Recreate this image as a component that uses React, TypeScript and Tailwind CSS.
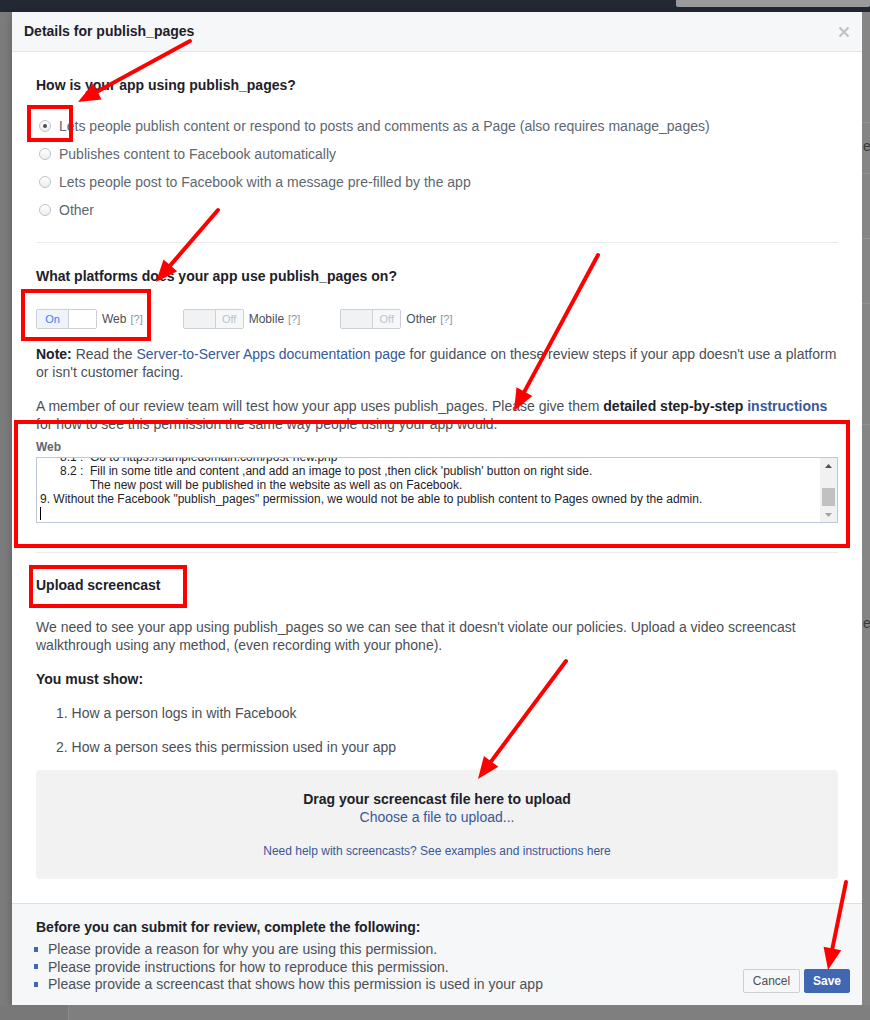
import React from "react";

const radios = [
  "Lets people publish content or respond to posts and comments as a Page (also requires manage_pages)",
  "Publishes content to Facebook automatically",
  "Lets people post to Facebook with a message pre-filled by the app",
  "Other",
];

const platforms = [
  { name: "Web", on: true },
  { name: "Mobile", on: false },
  { name: "Other", on: false },
];

const todo = [
  "Please provide a reason for why you are using this permission.",
  "Please provide instructions for how to reproduce this permission.",
  "Please provide a screencast that shows how this permission is used in your app",
];

// red annotation arrows: [startX, startY, tipX, tipY]
const arrows = [
  [190, 41, 78, 102],
  [218, 210, 156, 282],
  [598, 255, 514, 411],
  [566, 661, 478, 779],
  [846, 882, 828, 970],
];

function Arrow({ a }: { a: number[] }) {
  const [sx, sy, tx, ty] = a;
  const len = Math.hypot(tx - sx, ty - sy);
  const ux = (tx - sx) / len;
  const uy = (ty - sy) / len;
  const bx = tx - ux * 22;
  const by = ty - uy * 22;
  const nx = -uy * 9;
  const ny = ux * 9;
  return (
    <g>
      <line x1={sx} y1={sy} x2={bx} y2={by} stroke="#ff0000" strokeWidth={4} strokeLinecap="round" />
      <polygon points={`${tx},${ty} ${bx + nx},${by + ny} ${bx - nx},${by - ny}`} fill="#ff0000" />
    </g>
  );
}

function Toggle({ on }: { on: boolean }) {
  if (on) {
    return (
      <div className="flex h-[20px] w-[61px] overflow-hidden rounded-[2px] border border-[#ccd0d5]">
        <div className="flex w-[31px] items-center justify-center bg-[#eef3fc] text-[11px] text-[#4080ff]">On</div>
        <div className="flex-1 border-l border-[#ccd0d5] bg-white" />
      </div>
    );
  }
  return (
    <div className="flex h-[20px] w-[61px] overflow-hidden rounded-[2px] border border-[#ccd0d5]">
      <div className="w-[31px] bg-[#f1f2f4]" />
      <div className="flex flex-1 items-center justify-center border-l border-[#ccd0d5] bg-[#f6f7f9] text-[11px] text-[#bec2c9]">
        Off
      </div>
    </div>
  );
}

export default function App() {
  return (
    <div className="relative h-[1020px] w-[870px] overflow-hidden bg-[#7c7c7c] font-['Liberation_Sans',Arial,sans-serif]">
      {/* dimmed page behind the dialog */}
      <div className="flex h-[12px] justify-end bg-[#222933]">
        <div className="h-[7px] w-[194px] rounded-b-[2px] bg-[#9a9a9a]" />
      </div>
      <div className="absolute left-[862px] top-[12px] h-[1008px] w-[8px] bg-[#858585]">
        <div className="mt-[110px] h-px bg-[#929292]" />
        <div className="mt-[50px] h-px bg-[#929292]" />
        <div className="mt-[64px] h-px bg-[#929292]" />
        <div className="mt-[64px] h-px bg-[#929292]" />
        <div className="mt-[120px] h-px bg-[#929292]" />
      </div>
      <div className="absolute left-[863px] top-[136px] text-[14px] text-[#3a3a3a]">er</div>
      <div className="absolute left-[863px] top-[613px] text-[14px] text-[#3a3a3a]">er</div>
      <div className="absolute left-0 top-[1005px] flex h-[15px] w-[870px]">
        <div className="w-[68px] bg-[#787878]" />
        <div className="flex-1 border-l border-[#8c8c8c] bg-[#7f7f7f]" />
      </div>

      {/* dialog */}
      <div className="pl-[12px]">
        <div className="flex h-[993px] w-[850px] flex-col bg-white shadow-[0_2px_8px_rgba(0,0,0,0.25)]">
          <div className="flex h-[40px] items-center justify-between border-b border-[#e5e5e5] bg-[#f6f7f9] px-[12px]">
            <span className="text-[14px] font-bold text-[#1d2129]">Details for publish_pages</span>
            <svg width="12" height="12" viewBox="0 0 12 12">
              <path d="M1.5 1.5 L10.5 10.5 M10.5 1.5 L1.5 10.5" stroke="#bec2c9" strokeWidth="2.2" />
            </svg>
          </div>

          <div className="flex-1 px-[24px] pt-[24px] text-[14px] leading-[18px] text-[#4b4f56]">
            <h3 className="font-bold text-[#1d2129]">How is your app using publish_pages?</h3>
            <div className="mt-[18px]">
              {radios.map((r, i) => (
                <div key={i} className="flex h-[28px] items-center">
                  <div className="ml-[3px] flex h-[12px] w-[12px] items-center justify-center rounded-full border border-[#bec2c9] bg-gradient-to-b from-white to-[#eceef0]">
                    {i === 0 && <div className="h-[4px] w-[4px] rounded-full bg-[#4b4f56]" />}
                  </div>
                  <span className="ml-[8px] text-[#606770]">{r}</span>
                </div>
              ))}
            </div>
            <div className="mt-[18px] h-px bg-[#e9ebee]" />

            <h3 className="mt-[24px] font-bold text-[#1d2129]">What platforms does your app use publish_pages on?</h3>
            <div className="mt-[24px] flex items-center gap-[40px]">
              {platforms.map((p) => (
                <div key={p.name} className="flex items-center">
                  <Toggle on={p.on} />
                  <span className="ml-[5px] text-[12px] text-[#4b4f56]">{p.name}</span>
                  <span className="ml-[4px] text-[11px] text-[#90949c]">[?]</span>
                </div>
              ))}
            </div>

            <p className="mt-[16px]">
              <b className="text-[#1d2129]">Note:</b> Read the{" "}
              <span className="text-[#385898]">Server-to-Server Apps documentation page</span> for guidance on these
              review steps if your app doesn't use a platform
              <br />
              or isn't customer facing.
            </p>
            <p className="mt-[16px]">
              A member of our review team will test how your app uses publish_pages. Please give them{" "}
              <b className="text-[#1d2129]">detailed step-by-step</b>{" "}
              <b className="text-[#385898]">instructions</b>
              <br />
              for how to see this permission the same way people using your app would.
            </p>

            <div className="mt-[6px] text-[12px] font-bold leading-[16px] text-[#606770]">Web</div>
            <div className="mt-[2px] flex h-[66px] border border-[#bdc7d8]">
              <div className="flex-1 overflow-hidden pl-[3px] text-[12px] leading-[14px] text-[#1d2129]">
                <div className="-mt-[8px] whitespace-pre">
                  <div className="flex">
                    <span className="w-[50px] pl-[20px]">8.1 :</span>
                    <span>Go to https://sampledomain.com/post-new.php</span>
                  </div>
                  <div className="flex">
                    <span className="w-[50px] pl-[20px]">8.2 :</span>
                    <span>Fill in some title and content ,and add an image to post ,then click 'publish' button on right side.</span>
                  </div>
                  <div className="pl-[50px]">The new post will be published in the website as well as on Facebook.</div>
                  <div>9. Without the Facebook "publish_pages" permission, we would not be able to publish content to Pages owned by the admin.</div>
                  <div className="flex h-[14px] items-center">
                    <div className="h-[13px] w-px bg-black" />
                  </div>
                </div>
              </div>
              <div className="flex w-[17px] flex-col items-center bg-[#f1f1f1]">
                <svg width="17" height="17" viewBox="0 0 17 17">
                  <path d="M5 10 L8.5 6 L12 10 Z" fill="#505050" />
                </svg>
                <div className="mt-[13px] h-[18px] w-[13px] bg-[#c1c1c1]" />
                <div className="flex-1" />
                <svg width="17" height="14" viewBox="0 0 17 14">
                  <path d="M5 5 L8.5 9 L12 5 Z" fill="#a3a3a3" />
                </svg>
              </div>
            </div>
            <div className="mt-[29px] h-px bg-[#e9ebee]" />

            <h3 className="mt-[23px] font-bold text-[#1d2129]">Upload screencast</h3>
            <p className="mt-[24px]">
              We need to see your app using publish_pages so we can see that it doesn't violate our policies. Upload a
              video screencast
              <br />
              walkthrough using any method, (even recording with your phone).
            </p>
            <h3 className="mt-[16px] font-bold text-[#1d2129]">You must show:</h3>
            <div className="mt-[16px] pl-[20px]">1. How a person logs in with Facebook</div>
            <div className="mt-[16px] pl-[20px]">2. How a person sees this permission used in your app</div>

            <div className="mt-[14px] flex h-[109px] flex-col items-center rounded-[4px] bg-[#f2f2f2] pt-[20px]">
              <div className="font-bold text-[#1d2129]">Drag your screencast file here to upload</div>
              <div className="text-[#385898]">Choose a file to upload...</div>
              <div className="mt-[17px] text-[12px] leading-[16px] text-[#385898]">
                Need help with screencasts? See examples and instructions here
              </div>
            </div>
          </div>

          <div className="flex h-[102px] items-end justify-between border-t border-[#dddfe2] bg-[#f6f7f9] px-[24px] pb-[12px] pr-[12px] text-[14px] leading-[18px] text-[#4b4f56]">
            <div>
              <h3 className="font-bold text-[#1d2129]">Before you can submit for review, complete the following:</h3>
              <ul className="mt-[5px]">
                {todo.map((t) => (
                  <li key={t} className="flex h-[17.5px] items-center">
                    <span className="-ml-[2px] h-[5px] w-[4px] bg-[#4267b2]" />
                    <span className="ml-[10px]">{t}</span>
                  </li>
                ))}
              </ul>
            </div>
            <div className="flex gap-[4px]">
              <button className="h-[24px] w-[57px] rounded-[2px] border border-[#ced0d4] bg-[#f6f7f9] text-[12px] text-[#4b4f56]">
                Cancel
              </button>
              <button className="h-[24px] w-[46px] rounded-[2px] border border-[#4267b2] bg-[#4267b2] text-[12px] font-bold text-white">
                Save
              </button>
            </div>
          </div>
        </div>
      </div>

      {/* red annotations */}
      <svg className="pointer-events-none absolute left-0 top-0" width="870" height="1020">
        <rect x="29" y="107" width="42" height="33" fill="none" stroke="#ff0000" strokeWidth="4" />
        <rect x="23" y="291" width="126" height="48" fill="none" stroke="#ff0000" strokeWidth="4" />
        <rect x="16" y="422" width="832" height="124" fill="none" stroke="#ff0000" strokeWidth="4" />
        <rect x="31" y="567" width="154" height="39" fill="none" stroke="#ff0000" strokeWidth="4" />
        {arrows.map((a, i) => (
          <Arrow key={i} a={a} />
        ))}
      </svg>
    </div>
  );
}
